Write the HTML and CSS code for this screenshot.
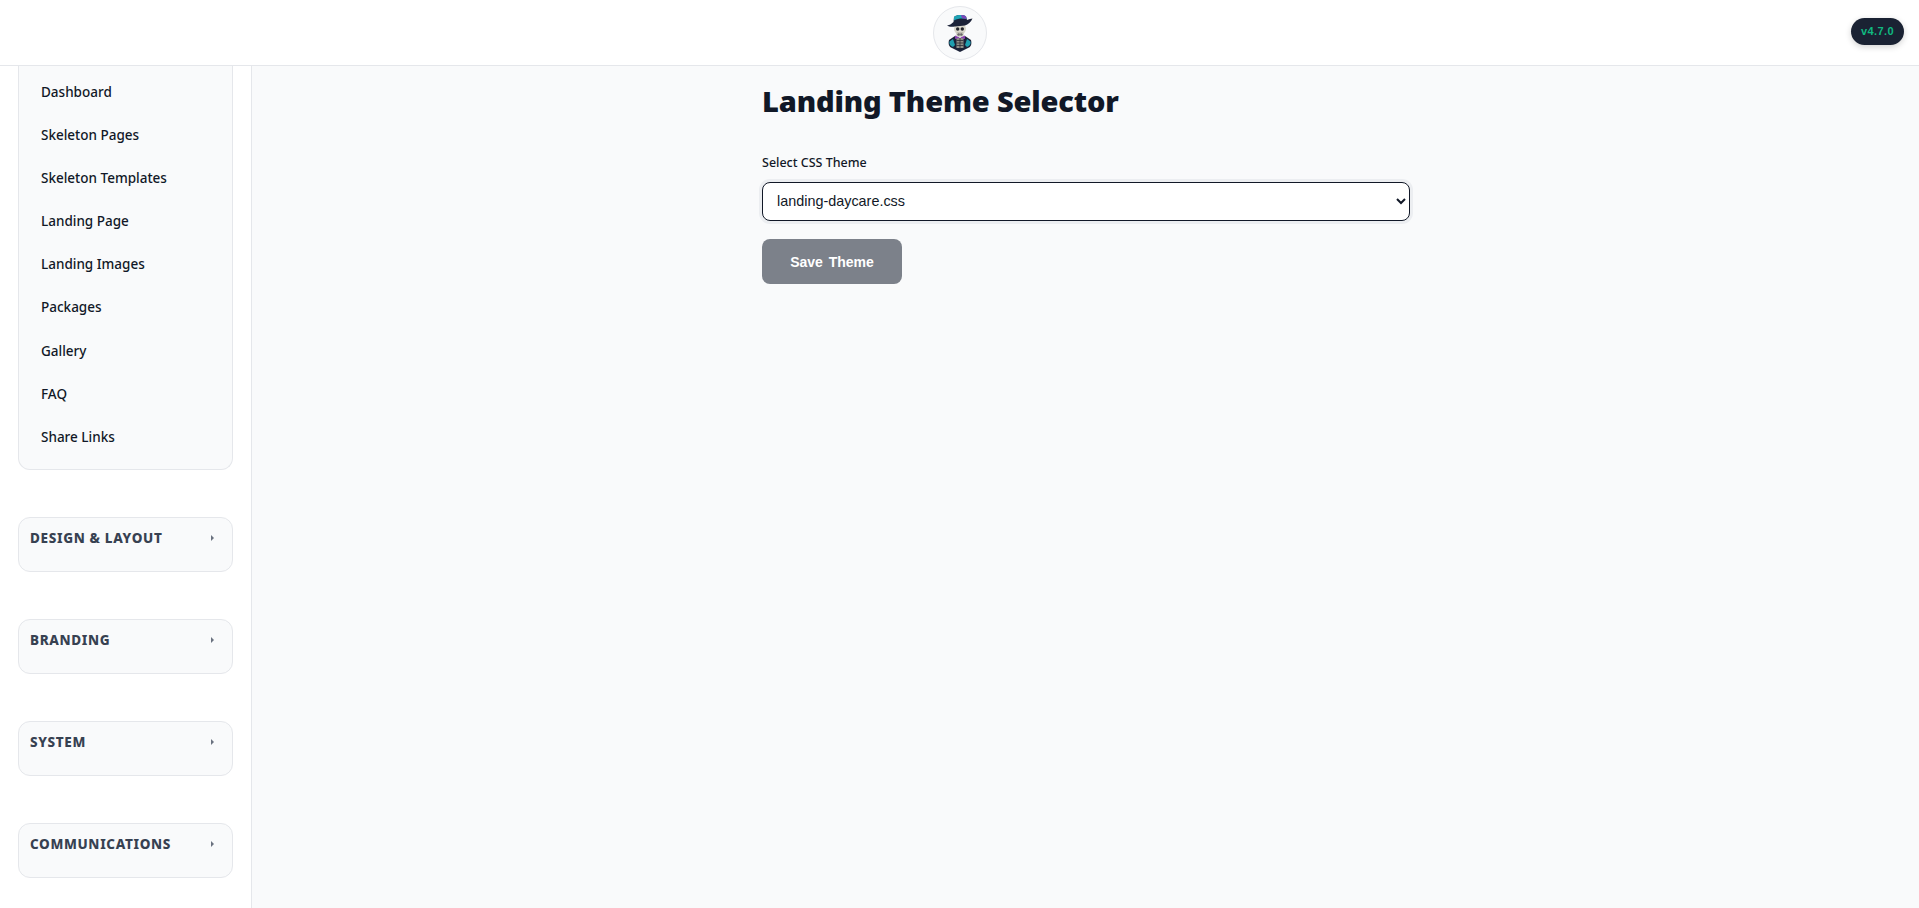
FILE: index.html
```html
<!DOCTYPE html>
<html lang="en">
<head>
    <meta charset="UTF-8">
    <meta name="viewport" content="width=device-width, initial-scale=1.0">
    <title>Landing Theme Selector</title>
    <link rel="stylesheet" href="styles.css">
</head>
<body>
    <header class="topbar">
        <div class="logo">
            <svg width="26" height="38" viewBox="0 0 26 38">
                <!-- jacket -->
                <path d="M8 22 L2 26 C1 30 2 33 5 34 L13 38 L21 34 C24 33 25 30 24 26 L18 22 L13 30 Z" fill="#1b2238"/>
                <path d="M6 25 L2.5 27.5 C2 30 3 32 6 33 L8 31 Z M20 25 L23.5 27.5 C24 30 23 32 20 33 L18 31 Z" fill="#1f9fb0"/>
                <!-- ribs -->
                <rect x="9.5" y="24" width="7" height="10" fill="#8f8f88"/>
                <path d="M13 24 V35 M9.5 26.5 H16.5 M9.5 29 H16.5 M9.5 31.5 H16.5" stroke="#2b2c36" stroke-width="0.8"/>
                <path d="M8 21.5 L13 23.5 L18 21.5 L18 25 L13 23.5 L8 25 Z" fill="#8a3fb0"/>
                <!-- skull -->
                <ellipse cx="13" cy="15" rx="6" ry="5.5" fill="#d8d6cb"/>
                <rect x="9.5" y="18" width="7" height="4.5" rx="1" fill="#bdbbb0"/>
                <circle cx="10.7" cy="15" r="1.7" fill="#23242c"/>
                <circle cx="15.3" cy="15" r="1.7" fill="#23242c"/>
                <path d="M10 20.5 H16 M11.5 19 V22 M13 19 V22 M14.5 19 V22" stroke="#4a4a52" stroke-width="0.5"/>
                <!-- hat -->
                <path d="M0 11.5 C3 11 5 9.5 6.5 8 L7 3 C10 0.5 16 0.5 19 2.5 L20 6 C22 5.5 24 4.5 25.5 4.5 C24 8 21 10.5 18 11.5 L8 12.5 C5 13 2 13 0 11.5 Z" fill="#1b2238"/>
                <path d="M7 3 C10 0.5 16 0.5 19 2.5 L19.5 5 C15 4 11 4.5 7 6.5 Z" fill="#1fa3b5"/>
                <path d="M14 1 C16 1 18 1.5 19 2.5 L19.5 5 L15 4.3 Z" fill="#7b46b8"/>
            </svg>
        </div>
        <span class="version">v4.7.0</span>
    </header>

    <div class="layout">
        <aside class="sidebar">
            <nav class="nav-group nav-open">
                <a class="nav-link">Dashboard</a>
                <a class="nav-link">Skeleton Pages</a>
                <a class="nav-link">Skeleton Templates</a>
                <a class="nav-link">Landing Page</a>
                <a class="nav-link">Landing Images</a>
                <a class="nav-link">Packages</a>
                <a class="nav-link">Gallery</a>
                <a class="nav-link">FAQ</a>
                <a class="nav-link">Share Links</a>
            </nav>
            <div class="nav-group nav-closed">
                <span class="nav-title">DESIGN &amp; LAYOUT</span>
                <span class="caret"></span>
            </div>
            <div class="nav-group nav-closed">
                <span class="nav-title">BRANDING</span>
                <span class="caret"></span>
            </div>
            <div class="nav-group nav-closed">
                <span class="nav-title">SYSTEM</span>
                <span class="caret"></span>
            </div>
            <div class="nav-group nav-closed">
                <span class="nav-title">COMMUNICATIONS</span>
                <span class="caret"></span>
            </div>
        </aside>

        <main class="content">
            <div class="panel">
                <h1>Landing Theme Selector</h1>
                <label class="field-label" for="theme">Select CSS Theme</label>
                <select class="field-select" id="theme">
                    <option>landing-daycare.css</option>
                </select>
                <button class="save-btn">Save Theme</button>
            </div>
        </main>
    </div>
</body>
</html>
```

FILE: styles.css
```css
html, body {
    height: 100%;
}

body {
    margin: 0;
    font-family: "Noto Sans", "Open Sans", sans-serif;
    color: #111827;
    background-color: #fff;
    display: flex;
    flex-direction: column;
    overflow: hidden;
}

.topbar {
    flex: 0 0 65px;
    background-color: #fff;
    border-bottom: 1px solid #e5e7eb;
    display: flex;
    align-items: center;
    justify-content: center;
    position: relative;
}

.logo {
    width: 52px;
    height: 52px;
    border: 1px solid #e5e7eb;
    border-radius: 50%;
    background-color: #f9fafb;
    display: flex;
    align-items: center;
    justify-content: center;
}

.version {
    position: absolute;
    right: 15px;
    top: 18px;
    width: 53px;
    height: 27px;
    border-radius: 14px;
    background-color: #1a2233;
    box-shadow: 0 2px 6px rgba(0, 0, 0, 0.18);
    color: #10b981;
    font-family: "Liberation Sans", Arial, sans-serif;
    font-size: 11px;
    font-weight: bold;
    letter-spacing: 0.4px;
    line-height: 27px;
    text-align: center;
}

.layout {
    flex: 1;
    display: flex;
    min-height: 0;
}

.sidebar {
    width: 251px;
    padding: 0 18px;
    box-sizing: border-box;
    border-right: 1px solid #e5e7eb;
    background-color: #fff;
    flex: 0 0 252px;
    overflow: hidden;
}

.nav-group {
    background-color: #f9fafb;
    border: 1px solid #e5e7eb;
    border-radius: 12px;
    box-sizing: border-box;
}

.nav-open {
    border-top: 0;
    border-radius: 0 0 12px 12px;
    height: 404px;
    margin-bottom: 47px;
    padding-top: 4.5px;
}

.nav-link {
    display: block;
    height: 43.2px;
    line-height: 43px;
    padding-left: 22px;
    font-size: 13.5px;
    font-weight: 500;
    color: #111827;
}

.nav-closed {
    height: 55px;
    margin-bottom: 47px;
    padding: 7.5px 18px 0 11px;
    display: flex;
    justify-content: space-between;
    align-items: flex-start;
}

.nav-title {
    font-size: 13.5px;
    font-weight: 800;
    letter-spacing: 0.65px;
    line-height: 24px;
    color: #374151;
}

.caret {
    margin-top: 9px;
    width: 0;
    height: 0;
    border-top: 3px solid transparent;
    border-bottom: 3px solid transparent;
    border-left: 3.5px solid #6b7280;
}

.content {
    flex: 1;
    background-color: #f9fafb;
    padding-left: 510px;
}

.panel {
    width: 648px;
    display: flex;
    flex-direction: column;
    align-items: flex-start;
}

h1 {
    margin: 14px 0 0;
    font-size: 29px;
    font-weight: 900;
    letter-spacing: -0.15px;
    line-height: 42px;
    color: #111827;
}

.field-label {
    margin-top: 31px;
    font-size: 12.5px;
    font-weight: 500;
    line-height: 20px;
    color: #111827;
}

.field-select {
    margin-top: 9px;
    width: 100%;
    height: 39px;
    padding: 0 10px 2px;
    background-color: #fff;
    border: 1px solid #111827;
    border-radius: 8px;
    box-shadow: 0 0 0 3px #eceef1;
    color: #111827;
    font-family: "Liberation Sans", Arial, sans-serif;
    font-size: 14.4px;
}

.save-btn {
    margin-top: 18px;
    width: 140px;
    height: 45px;
    background-color: #7c818a;
    color: #fff;
    border: none;
    border-radius: 8px;
    font-family: "Liberation Sans", Arial, sans-serif;
    font-size: 14px;
    font-weight: bold;
    word-spacing: 2px;
}
```
